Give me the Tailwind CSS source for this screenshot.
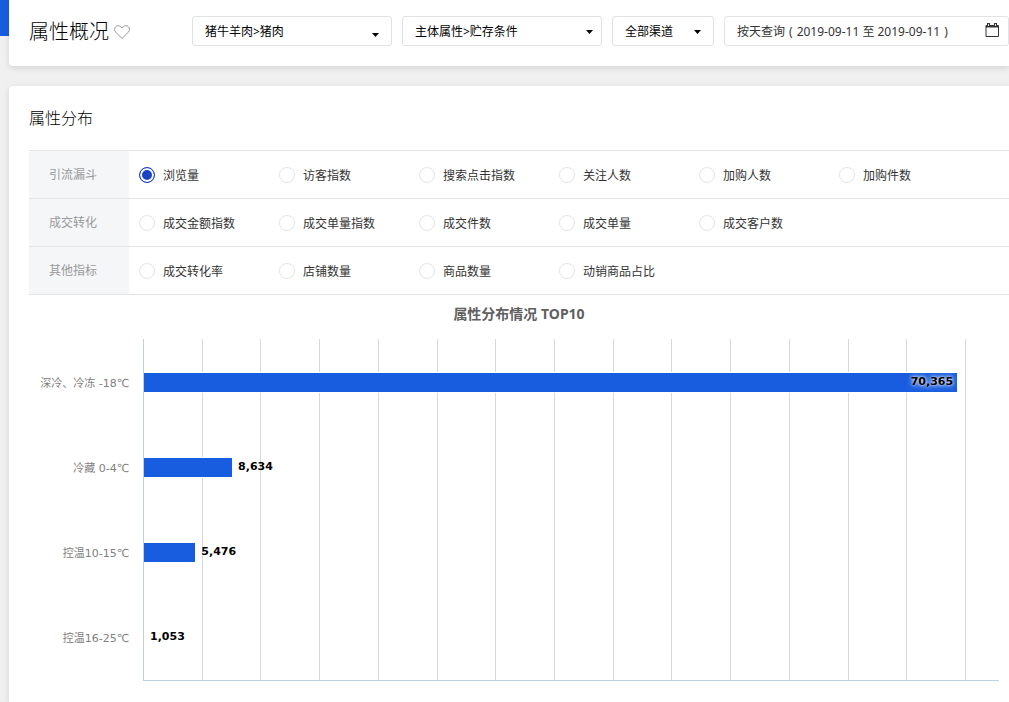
<!DOCTYPE html>
<html lang="zh-CN">
<head>
<meta charset="utf-8">
<title>属性概况</title>
<script src="https://cdn.jsdelivr.net/npm/@tailwindcss/browser@4"></script>
</head>
<body class="min-h-screen flex flex-col bg-[#f0f0f0] font-['Noto_Sans','Noto_Sans_CJK_SC',sans-serif] text-xs text-[#333]">
<div class="flex items-start">
  <div class="w-[9px] h-9 shrink-0 bg-[#185ddf]"></div>
  <header class="flex-1 flex items-center h-[66px] pl-5 pb-1 bg-white rounded-bl shadow-[0_2px_6px_rgba(0,0,0,0.12)]">
    <div class="w-[163px] shrink-0 pt-0.5 flex items-center gap-1">
      <h1 class="text-xl font-light text-black">属性概况</h1>
      <button aria-label="收藏" class="p-px">
        <svg class="w-4 h-4" viewBox="0 0 16 16" fill="none" stroke="#999" stroke-width="1"><path d="M8 14.5 1.600 8C.2 6.500.2 4.200 1.600 2.800 3 1.300 5.400 1.300 6.800 2.800L8 4l1.200-1.200c1.400-1.500 3.800-1.500 5.200 0 1.400 1.400 1.400 3.700 0 5.200z"/></svg>
      </button>
    </div>
    <div class="flex-1 flex gap-2.5">
      <div class="relative w-[200px]">
        <select aria-label="类目" class="appearance-none w-full h-[30px] pl-3 pr-6 pt-0.5 rounded-[3px] border border-[#dee2e6] bg-white text-black"><option>猪牛羊肉&gt;猪肉</option></select>
        <svg class="absolute right-[13px] top-[17px] w-[7px] h-1 pointer-events-none" viewBox="0 0 7 4"><path d="M0 0h7L3.500 4z"/></svg>
      </div>
      <div class="relative w-[200px]">
        <select aria-label="属性" class="appearance-none w-full h-[30px] pl-3 pr-6 pt-0.5 rounded-[3px] border border-[#dee2e6] bg-white text-black"><option>主体属性&gt;贮存条件</option></select>
        <svg class="absolute right-[9px] top-[14px] w-[7px] h-1 pointer-events-none" viewBox="0 0 7 4"><path d="M0 0h7L3.500 4z"/></svg>
      </div>
      <div class="relative w-[102px]">
        <select aria-label="渠道" class="appearance-none w-full h-[30px] pl-3 pr-6 pt-0.5 rounded-[3px] border border-[#dee2e6] bg-white text-black"><option>全部渠道</option></select>
        <svg class="absolute right-[13px] top-[14px] w-[7px] h-1 pointer-events-none" viewBox="0 0 7 4"><path d="M0 0h7L3.500 4z"/></svg>
      </div>
      <button class="flex-1 h-[30px] px-3 pr-[9px] flex items-center justify-between rounded-[3px] border border-[#e1e3e6]">
        <span class="flex gap-1 pt-0.5"><span>按天查询</span><span>(</span><span>2019-09-11 至 2019-09-11</span><span>)</span></span>
        <svg class="w-3.5 h-3.5 mb-0.5" viewBox="0 0 14 14" fill="none" stroke="#333"><path d="M1 2.500h12.500v11H1z"/><path d="M1 3.500h12" stroke-width="2"/><path d="M3.500 0v4M10.500 0v4" stroke-width="3"/><path d="M3.500 1v2M10.500 1v2" stroke="#ddd"/></svg>
      </button>
    </div>
  </header>
</div>
<main class="mt-5 ml-[9px] flex-1 pl-5 pb-[21px] bg-white rounded-tl shadow-[0_2px_6px_rgba(0,0,0,0.12)]">
  <h2 class="pt-5 pb-5 text-base leading-6 font-light text-black">属性分布</h2>
  <form class="border-t border-[#e4e5e7]">
    <div role="radiogroup" aria-label="引流漏斗" class="flex min-h-12 border-b border-[#e4e5e7]">
      <div class="w-[100px] pl-5 flex items-center bg-[#f4f6f8] text-[#999]">引流漏斗</div>
      <div class="flex-1 flex flex-wrap items-center pl-2.5">
        <label class="w-[140px] flex items-center gap-2"><input type="radio" name="m" checked class="appearance-none w-4 h-4 rounded-full border border-[#e2e3e5] checked:border-[#1b43c8] checked:bg-[#1b43c8] checked:shadow-[inset_0_0_0_2px_white]"><span class="pt-0.5">浏览量</span></label>
        <label class="w-[140px] flex items-center gap-2"><input type="radio" name="m" class="appearance-none w-4 h-4 rounded-full border border-[#e2e3e5] checked:border-[#1b43c8] checked:bg-[#1b43c8] checked:shadow-[inset_0_0_0_2px_white]"><span class="pt-0.5">访客指数</span></label>
        <label class="w-[140px] flex items-center gap-2"><input type="radio" name="m" class="appearance-none w-4 h-4 rounded-full border border-[#e2e3e5] checked:border-[#1b43c8] checked:bg-[#1b43c8] checked:shadow-[inset_0_0_0_2px_white]"><span class="pt-0.5">搜索点击指数</span></label>
        <label class="w-[140px] flex items-center gap-2"><input type="radio" name="m" class="appearance-none w-4 h-4 rounded-full border border-[#e2e3e5] checked:border-[#1b43c8] checked:bg-[#1b43c8] checked:shadow-[inset_0_0_0_2px_white]"><span class="pt-0.5">关注人数</span></label>
        <label class="w-[140px] flex items-center gap-2"><input type="radio" name="m" class="appearance-none w-4 h-4 rounded-full border border-[#e2e3e5] checked:border-[#1b43c8] checked:bg-[#1b43c8] checked:shadow-[inset_0_0_0_2px_white]"><span class="pt-0.5">加购人数</span></label>
        <label class="w-[140px] flex items-center gap-2"><input type="radio" name="m" class="appearance-none w-4 h-4 rounded-full border border-[#e2e3e5] checked:border-[#1b43c8] checked:bg-[#1b43c8] checked:shadow-[inset_0_0_0_2px_white]"><span class="pt-0.5">加购件数</span></label>
      </div>
    </div>
    <div role="radiogroup" aria-label="成交转化" class="flex min-h-12 border-b border-[#e4e5e7]">
      <div class="w-[100px] pl-5 flex items-center bg-[#f4f6f8] text-[#999]">成交转化</div>
      <div class="flex-1 flex flex-wrap items-center pl-2.5">
        <label class="w-[140px] flex items-center gap-2"><input type="radio" name="m" class="appearance-none w-4 h-4 rounded-full border border-[#e2e3e5] checked:border-[#1b43c8] checked:bg-[#1b43c8] checked:shadow-[inset_0_0_0_2px_white]"><span class="pt-0.5">成交金额指数</span></label>
        <label class="w-[140px] flex items-center gap-2"><input type="radio" name="m" class="appearance-none w-4 h-4 rounded-full border border-[#e2e3e5] checked:border-[#1b43c8] checked:bg-[#1b43c8] checked:shadow-[inset_0_0_0_2px_white]"><span class="pt-0.5">成交单量指数</span></label>
        <label class="w-[140px] flex items-center gap-2"><input type="radio" name="m" class="appearance-none w-4 h-4 rounded-full border border-[#e2e3e5] checked:border-[#1b43c8] checked:bg-[#1b43c8] checked:shadow-[inset_0_0_0_2px_white]"><span class="pt-0.5">成交件数</span></label>
        <label class="w-[140px] flex items-center gap-2"><input type="radio" name="m" class="appearance-none w-4 h-4 rounded-full border border-[#e2e3e5] checked:border-[#1b43c8] checked:bg-[#1b43c8] checked:shadow-[inset_0_0_0_2px_white]"><span class="pt-0.5">成交单量</span></label>
        <label class="w-[140px] flex items-center gap-2"><input type="radio" name="m" class="appearance-none w-4 h-4 rounded-full border border-[#e2e3e5] checked:border-[#1b43c8] checked:bg-[#1b43c8] checked:shadow-[inset_0_0_0_2px_white]"><span class="pt-0.5">成交客户数</span></label>
      </div>
    </div>
    <div role="radiogroup" aria-label="其他指标" class="flex min-h-12 border-b border-[#e4e5e7]">
      <div class="w-[100px] pl-5 flex items-center bg-[#f4f6f8] text-[#999]">其他指标</div>
      <div class="flex-1 flex flex-wrap items-center pl-2.5">
        <label class="w-[140px] flex items-center gap-2"><input type="radio" name="m" class="appearance-none w-4 h-4 rounded-full border border-[#e2e3e5] checked:border-[#1b43c8] checked:bg-[#1b43c8] checked:shadow-[inset_0_0_0_2px_white]"><span class="pt-0.5">成交转化率</span></label>
        <label class="w-[140px] flex items-center gap-2"><input type="radio" name="m" class="appearance-none w-4 h-4 rounded-full border border-[#e2e3e5] checked:border-[#1b43c8] checked:bg-[#1b43c8] checked:shadow-[inset_0_0_0_2px_white]"><span class="pt-0.5">店铺数量</span></label>
        <label class="w-[140px] flex items-center gap-2"><input type="radio" name="m" class="appearance-none w-4 h-4 rounded-full border border-[#e2e3e5] checked:border-[#1b43c8] checked:bg-[#1b43c8] checked:shadow-[inset_0_0_0_2px_white]"><span class="pt-0.5">商品数量</span></label>
        <label class="w-[140px] flex items-center gap-2"><input type="radio" name="m" class="appearance-none w-4 h-4 rounded-full border border-[#e2e3e5] checked:border-[#1b43c8] checked:bg-[#1b43c8] checked:shadow-[inset_0_0_0_2px_white]"><span class="pt-0.5">动销商品占比</span></label>
      </div>
    </div>
  </form>
  <section>
    <h3 class="pt-[9px] pb-[15px] text-center text-sm font-bold text-[#606060]">属性分布情况 TOP10</h3>
    <div class="flex pr-2.5">
      <div class="w-[114px] pr-3.5 pt-0.5 -mb-px flex flex-col text-right text-[11px] leading-[85px] text-[#808080] font-['DejaVu_Sans','Noto_Sans_CJK_SC',sans-serif]">
        <div>深冷、冷冻 -18℃</div>
        <div>冷藏 0-4℃</div>
        <div>控温10-15℃</div>
        <div>控温16-25℃</div>
      </div>
      <div class="relative flex-1 pt-px border-l border-b border-[#c0d0e0] font-bold text-[11px] text-black font-['DejaVu_Sans',sans-serif]">
        <!-- vertical grid lines behind the bars -->
        <div class="absolute inset-y-0 left-0 w-[96.14%] flex" aria-hidden="true">
          <div class="flex-1 border-r border-[#d8d8d8]"></div><div class="flex-1 border-r border-[#d8d8d8]"></div><div class="flex-1 border-r border-[#d8d8d8]"></div><div class="flex-1 border-r border-[#d8d8d8]"></div><div class="flex-1 border-r border-[#d8d8d8]"></div><div class="flex-1 border-r border-[#d8d8d8]"></div><div class="flex-1 border-r border-[#d8d8d8]"></div><div class="flex-1 border-r border-[#d8d8d8]"></div><div class="flex-1 border-r border-[#d8d8d8]"></div><div class="flex-1 border-r border-[#d8d8d8]"></div><div class="flex-1 border-r border-[#d8d8d8]"></div><div class="flex-1 border-r border-[#d8d8d8]"></div><div class="flex-1 border-r border-[#d8d8d8]"></div><div class="flex-1 border-r border-[#d8d8d8]"></div>
        </div>
        <div class="relative">
          <div class="h-[85px] flex items-center"><div class="h-[19px] pr-1 flex items-center justify-end bg-[#185ddf] ring-1 ring-white [clip-path:inset(-1px_-1px_-1px_0)] [text-shadow:0_0_6px_white,0_0_3px_white]" style="width:95.1%">70,365</div></div>
          <div class="h-[85px] flex items-center"><div class="h-[19px] bg-[#185ddf] ring-1 ring-white [clip-path:inset(-1px_-1px_-1px_0)]" style="width:10.3%"></div><span class="pl-1.5">8,634</span></div>
          <div class="h-[85px] flex items-center"><div class="h-[19px] bg-[#185ddf] ring-1 ring-white [clip-path:inset(-1px_-1px_-1px_0)]" style="width:6%"></div><span class="pl-1.5">5,476</span></div>
          <div class="h-[85px] flex items-center"><span class="pl-1.5">1,053</span></div>
        </div>
      </div>
    </div>
  </section>
</main>
</body>
</html>
